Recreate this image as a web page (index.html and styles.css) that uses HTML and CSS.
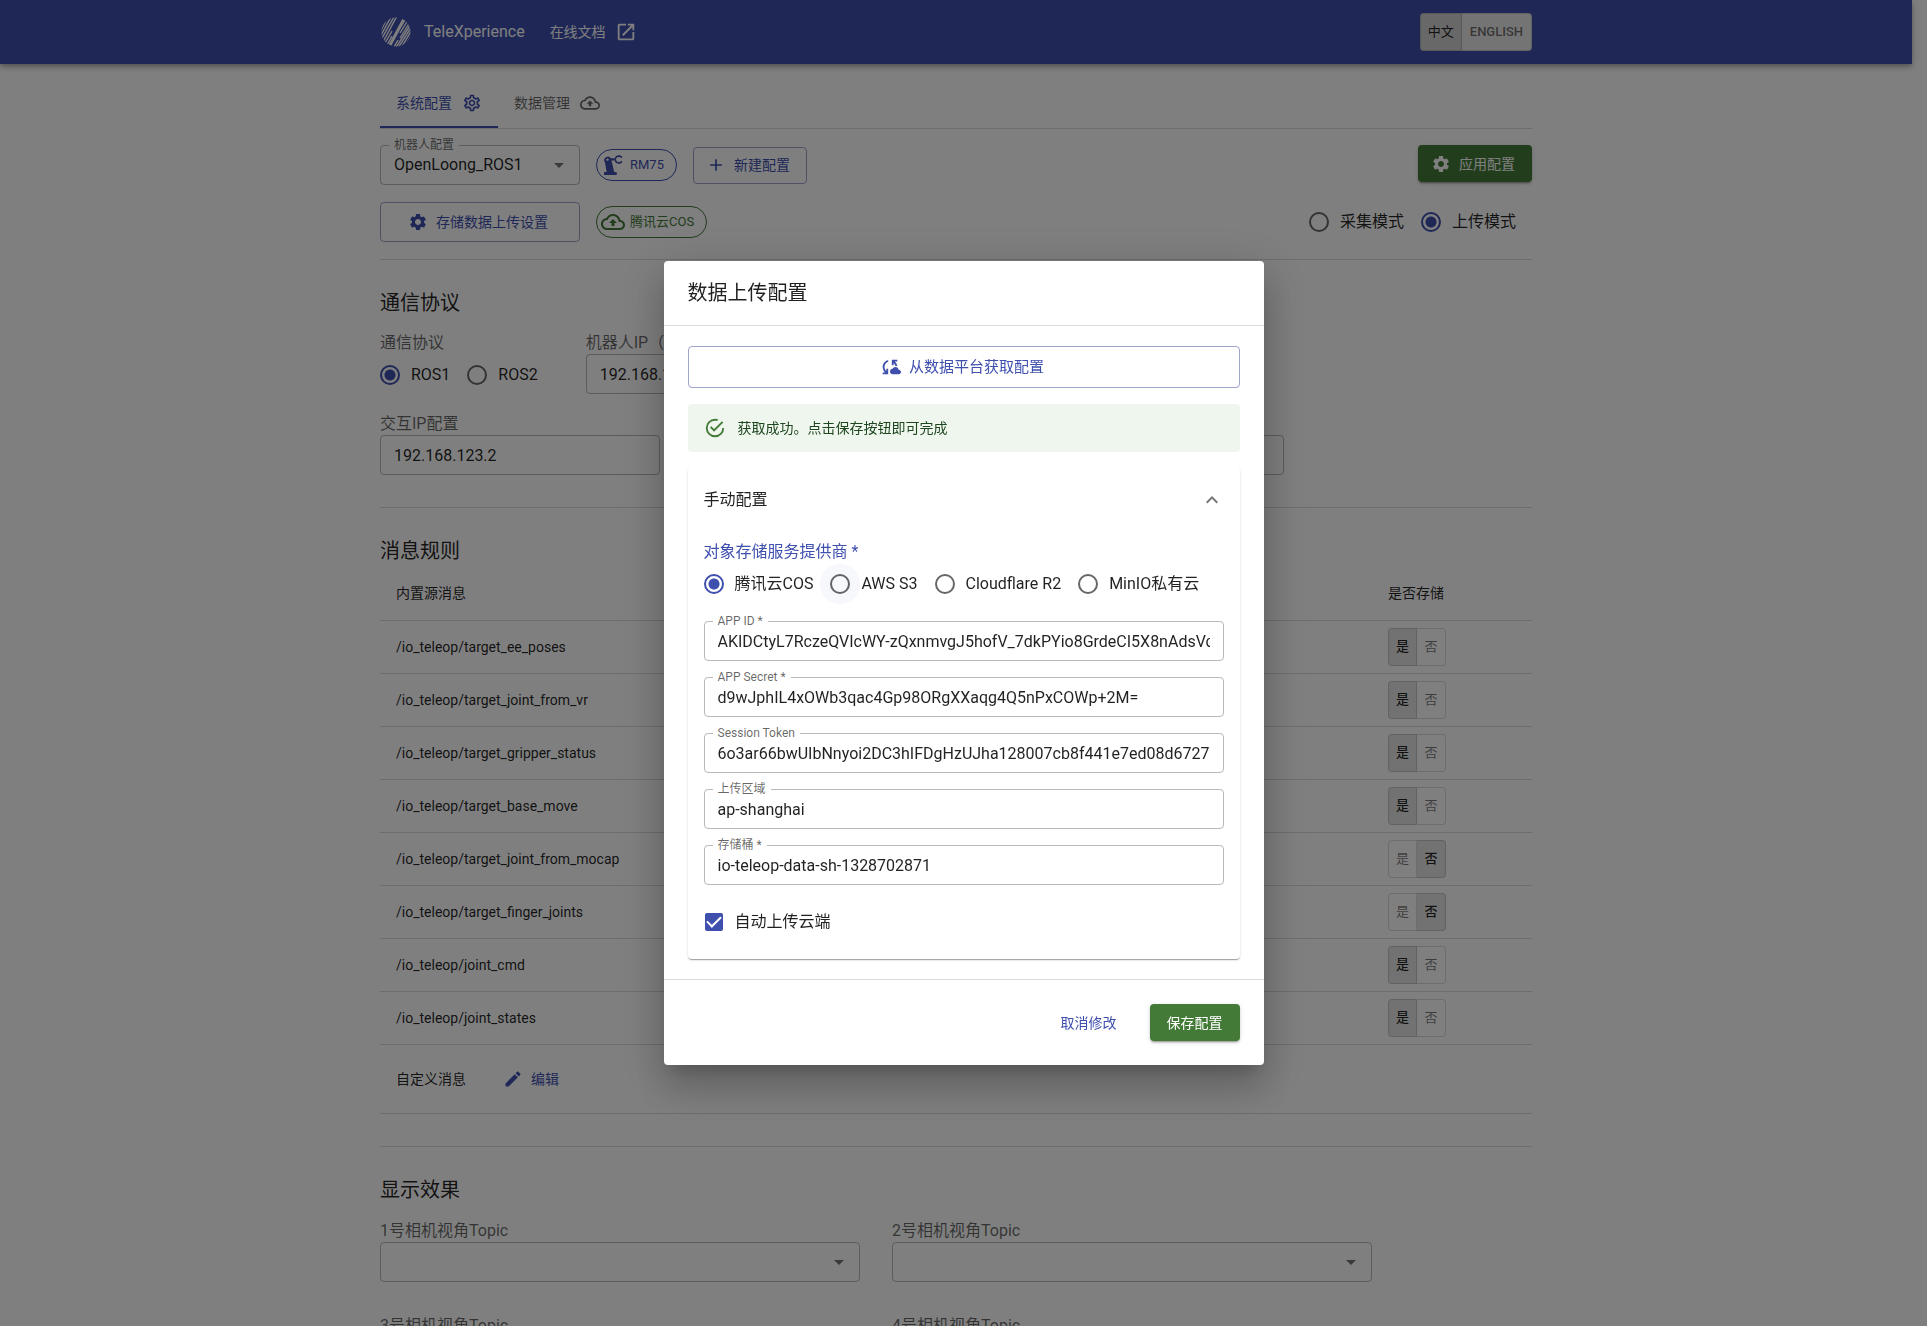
FILE: index.html
```html
<!DOCTYPE html>
<html lang="zh-CN">
<head>
<meta charset="utf-8">
<meta name="viewport" content="width=device-width, initial-scale=1">
<title>TeleXperience</title>
<link rel="stylesheet" href="styles.css">
</head>
<body>
<svg class="sprite" aria-hidden="true">
  <symbol id="i-gear" viewBox="0 0 24 24"><path d="M19.14 12.94c.04-.3.06-.61.06-.94 0-.32-.02-.64-.07-.94l2.03-1.58c.18-.14.23-.41.12-.61l-1.92-3.32c-.12-.22-.37-.29-.59-.22l-2.39.96c-.5-.38-1.03-.7-1.62-.94l-.36-2.54c-.04-.24-.24-.41-.48-.41h-3.84c-.24 0-.43.17-.47.41l-.36 2.54c-.59.24-1.13.57-1.62.94l-2.39-.96c-.22-.08-.47 0-.59.22L2.74 8.87c-.12.21-.08.47.12.61l2.03 1.58c-.05.3-.09.63-.09.94s.02.64.07.94l-2.03 1.58c-.18.14-.23.41-.12.61l1.92 3.32c.12.22.37.29.59.22l2.39-.96c.5.38 1.03.7 1.62.94l.36 2.54c.05.24.24.41.48.41h3.84c.24 0 .44-.17.47-.41l.36-2.54c.59-.24 1.13-.56 1.62-.94l2.39.96c.22.08.47 0 .59-.22l1.92-3.32c.12-.22.07-.47-.12-.61l-2.01-1.58zM12 15.6c-1.98 0-3.6-1.62-3.6-3.6s1.62-3.6 3.6-3.6 3.6 1.62 3.6 3.6-1.62 3.6-3.6 3.6z"/></symbol>
  <symbol id="i-gear-line" viewBox="0 0 24 24"><path d="M19.43 12.98c.04-.32.07-.64.07-.98 0-.34-.03-.66-.07-.98l2.11-1.65c.19-.15.24-.42.12-.64l-2-3.46c-.09-.16-.26-.25-.44-.25-.06 0-.12.01-.17.03l-2.49 1c-.52-.4-1.08-.73-1.69-.98l-.38-2.65C14.46 2.18 14.25 2 14 2h-4c-.25 0-.46.18-.49.42l-.38 2.65c-.61.25-1.17.59-1.69.98l-2.49-1c-.06-.02-.12-.03-.18-.03-.17 0-.34.09-.43.25l-2 3.46c-.13.22-.07.49.12.64l2.11 1.65c-.04.32-.07.65-.07.98 0 .33.03.66.07.98l-2.11 1.65c-.19.15-.24.42-.12.64l2 3.46c.09.16.26.25.44.25.06 0 .12-.01.17-.03l2.49-1c.52.4 1.08.73 1.69.98l.38 2.65c.03.24.24.42.49.42h4c.25 0 .46-.18.49-.42l.38-2.65c.61-.25 1.17-.59 1.69-.98l2.49 1c.06.02.12.03.18.03.17 0 .34-.09.43-.25l2-3.46c.12-.22.07-.49-.12-.64l-2.11-1.65zm-1.98-1.71c.04.31.05.52.05.73 0 .21-.02.43-.05.73l-.14 1.13.89.7 1.08.84-.7 1.21-1.27-.51-1.04-.42-.9.68c-.43.32-.84.56-1.25.73l-1.06.43-.16 1.13-.2 1.35h-1.4l-.19-1.35-.16-1.13-1.06-.43c-.43-.18-.83-.41-1.23-.71l-.91-.7-1.06.43-1.27.51-.7-1.21 1.08-.84.89-.7-.14-1.13c-.03-.31-.05-.54-.05-.74s.02-.43.05-.73l.14-1.13-.89-.7-1.08-.84.7-1.21 1.27.51 1.04.42.9-.68c.43-.32.84-.56 1.25-.73l1.06-.43.16-1.13.2-1.35h1.39l.19 1.35.16 1.13 1.06.43c.43.18.83.41 1.23.71l.91.7 1.06-.43 1.27-.51.7 1.21-1.07.85-.89.7.14 1.13zM12 8c-2.21 0-4 1.79-4 4s1.79 4 4 4 4-1.79 4-4-1.79-4-4-4zm0 6c-1.1 0-2-.9-2-2s.9-2 2-2 2 .9 2 2-.9 2-2 2z"/></symbol>
  <symbol id="i-cloud" viewBox="0 0 24 24"><path d="M19.35 10.04C18.67 6.59 15.64 4 12 4 9.11 4 6.6 5.64 5.35 8.04 2.34 8.36 0 10.91 0 14c0 3.31 2.69 6 6 6h13c2.76 0 5-2.24 5-5 0-2.64-2.05-4.78-4.65-4.96zM19 18H6c-2.21 0-4-1.79-4-4 0-2.05 1.53-3.76 3.56-3.97l1.07-.11.5-.95C8.08 7.14 9.94 6 12 6c2.62 0 4.88 1.86 5.39 4.43l.3 1.5 1.53.11c1.56.1 2.78 1.41 2.78 2.96 0 1.65-1.35 3-3 3zM8 13h2.55v3h2.9v-3H16l-4-4z"/></symbol>
  <symbol id="i-launch" viewBox="0 0 24 24"><path d="M19 19H5V5h7V3H5c-1.11 0-2 .9-2 2v14c0 1.1.89 2 2 2h14c1.1 0 2-.9 2-2v-7h-2v7zM14 3v2h3.59l-9.83 9.83 1.41 1.41L19 6.41V10h2V3h-7z"/></symbol>
  <symbol id="i-robot" viewBox="0 0 24 24"><path d="M3 22v-2c0-.6.4-1 1-1h1.600L4 9.400A3.500 3.500 0 1 1 10 5.200h3.500V7.400h-3l2.700 11.600h1.600c.6 0 1 .4 1 1v2zM6.500 5.400a1.200 1.200 0 1 0 0 2.400 1.200 1.200 0 0 0 0-2.400z"/><path d="M21 4.500l-2.400-1.600-3.200.8-1.400 2.800 1.400 2.800 3.200.8 2.400-1.600" fill="none" stroke="currentColor" stroke-width="1.600"/></symbol>
  <symbol id="i-plus" viewBox="0 0 24 24"><path d="M19 13h-6v6h-2v-6H5v-2h6V5h2v6h6v2z"/></symbol>
  <symbol id="i-arrow" viewBox="0 0 24 24"><path d="M7 10l5 5 5-5z"/></symbol>
  <symbol id="i-edit" viewBox="0 0 24 24"><path d="M3 17.250V21h3.750L17.810 9.940l-3.750-3.750L3 17.250zM20.710 7.040c.39-.39.39-1.020 0-1.410l-2.340-2.340c-.39-.39-1.020-.39-1.410 0l-1.830 1.830 3.750 3.750 1.830-1.830z"/></symbol>
  <symbol id="i-sync" viewBox="0 0 24 24"><path d="M21.5 14.98c-.02 0-.03 0-.05.01C21.2 13.3 19.76 12 18 12c-1.4 0-2.6.83-3.16 2.02C13.26 14.1 12 15.4 12 17c0 1.66 1.34 3 3 3l6.500-.02c1.38 0 2.500-1.12 2.500-2.500s-1.12-2.500-2.500-2.500zM10 4.26v2.09C7.67 7.18 6 9.39 6 12c0 1.77.78 3.34 2 4.44V14h2v6H4v-2h2.73C5.06 16.54 4 14.4 4 12c0-3.73 2.55-6.85 6-7.74zM20 6h-2.73c1.43 1.26 2.41 3.01 2.66 5h-2.02c-.23-1.36-.93-2.55-1.91-3.44V10h-2V4h6v2z"/></symbol>
  <symbol id="i-ok" viewBox="0 0 24 24"><path d="M20,12A8,8 0 0,1 12,20A8,8 0 0,1 4,12A8,8 0 0,1 12,4C12.76,4 13.5,4.11 14.2,4.31L15.77,2.74C14.61,2.26 13.34,2 12,2A10,10 0 0,0 2,12A10,10 0 0,0 12,22A10,10 0 0,0 22,12M7.91,10.08L6.5,11.5L11,16L21,6L19.59,4.58L11,13.17L7.91,10.08Z"/></symbol>
  <symbol id="i-up" viewBox="0 0 24 24"><path d="M12 8l-6 6 1.410 1.410L12 10.830l4.590 4.580L18 14z"/></symbol>
</svg>

<div class="page">
  <header class="topbar">
    <div class="container topbar-inner">
      <svg class="logo" viewBox="0 0 30 30" aria-hidden="true">
        <defs><clipPath id="disc"><circle cx="15" cy="15" r="14.500"/></clipPath></defs>
        <g clip-path="url(#disc)" fill="none" stroke="currentColor" stroke-width="1.400">
          <path d="M-2 17L7 0M-1 20L10 0M0 23L13 0M2 25L16 -1M4 26L11 14M6 28L11 19M19 11L25 1M19 16L27 3M19 21L29 5M12 32L17 23M14 32L30 7M17 31L31 9M20 31L32 11M23 31L33 14"/>
          <path d="M9 28L23 2" stroke-width="3"/>
        </g>
      </svg>
      <span class="brand">TeleXperience</span>
      <a class="doc-link" href="#docs">在线文档<svg class="icon icon-22"><use href="#i-launch"/></svg></a>
      <div class="toggle lang" role="group" aria-label="语言">
        <button type="button" class="on" aria-pressed="true">中文</button><button type="button" aria-pressed="false">ENGLISH</button>
      </div>
    </div>
  </header>

  <main class="container">
    <nav class="tabs">
      <a class="tab active" href="#system">系统配置<svg class="icon icon-20"><use href="#i-gear-line"/></svg></a>
      <a class="tab" href="#data">数据管理<svg class="icon icon-20"><use href="#i-cloud"/></svg></a>
    </nav>

    <div class="toolbar">
      <div class="field robot-field">
        <label for="robot">机器人配置</label>
        <select id="robot"><option>OpenLoong_ROS1</option></select>
        <svg class="icon icon-24 caret"><use href="#i-arrow"/></svg>
      </div>
      <span class="chip chip-primary"><svg class="icon icon-24"><use href="#i-robot"/></svg>RM75</span>
      <button type="button" class="btn outlined"><svg class="icon icon-20"><use href="#i-plus"/></svg>新建配置</button>
      <button type="button" class="btn success push apply"><svg class="icon icon-20"><use href="#i-gear"/></svg>应用配置</button>
    </div>
    <div class="toolbar">
      <button type="button" class="btn outlined upload-btn"><svg class="icon icon-20"><use href="#i-gear"/></svg>存储数据上传设置</button>
      <span class="chip chip-success"><svg class="icon icon-24"><use href="#i-cloud"/></svg>腾讯云COS</span>
      <div class="radios push" role="radiogroup" aria-label="模式">
        <label><input type="radio" name="mode">采集模式</label>
        <label><input type="radio" name="mode" checked>上传模式</label>
      </div>
    </div>

    <section class="section">
      <h2>通信协议</h2>
      <div class="form-row">
        <fieldset class="plain">
          <legend class="caption">通信协议</legend>
          <div class="radios">
            <label><input type="radio" name="ros" checked>ROS1</label>
            <label><input type="radio" name="ros">ROS2</label>
          </div>
        </fieldset>
        <div class="stack ip-field">
          <label class="caption" for="robot-ip">机器人IP（主机）</label>
          <input class="box" id="robot-ip" type="text" value="192.168.123.10">
        </div>
      </div>
      <div class="form-row">
        <div class="stack ip-field">
          <label class="caption" for="ip-a">交互IP配置</label>
          <input class="box" id="ip-a" type="text" value="192.168.123.2">
        </div>
        <div class="stack wide-field">
          <label class="caption" for="ip-b">网关</label>
          <input class="box" id="ip-b" type="text" value="192.168.123.1">
        </div>
      </div>
    </section>

    <section class="section rules">
      <h2>消息规则</h2>
      <table>
        <thead><tr><th>内置源消息</th><th class="store">是否存储</th></tr></thead>
        <tbody>
          <tr><td>/io_teleop/target_ee_poses</td><td><div class="toggle"><button type="button" class="on">是</button><button type="button">否</button></div></td></tr>
          <tr><td>/io_teleop/target_joint_from_vr</td><td><div class="toggle"><button type="button" class="on">是</button><button type="button">否</button></div></td></tr>
          <tr><td>/io_teleop/target_gripper_status</td><td><div class="toggle"><button type="button" class="on">是</button><button type="button">否</button></div></td></tr>
          <tr><td>/io_teleop/target_base_move</td><td><div class="toggle"><button type="button" class="on">是</button><button type="button">否</button></div></td></tr>
          <tr><td>/io_teleop/target_joint_from_mocap</td><td><div class="toggle"><button type="button">是</button><button type="button" class="on">否</button></div></td></tr>
          <tr><td>/io_teleop/target_finger_joints</td><td><div class="toggle"><button type="button">是</button><button type="button" class="on">否</button></div></td></tr>
          <tr><td>/io_teleop/joint_cmd</td><td><div class="toggle"><button type="button" class="on">是</button><button type="button">否</button></div></td></tr>
          <tr><td>/io_teleop/joint_states</td><td><div class="toggle"><button type="button" class="on">是</button><button type="button">否</button></div></td></tr>
          <tr class="custom"><td colspan="2"><div class="custom-cell">自定义消息<button type="button" class="btn text"><svg class="icon icon-20"><use href="#i-edit"/></svg>编辑</button></div></td></tr>
        </tbody>
      </table>
    </section>

    <section class="section">
      <h2>显示效果</h2>
      <div class="cameras">
        <div class="stack"><label class="caption" for="cam1">1号相机视角Topic</label><div class="field"><select id="cam1"><option></option></select><svg class="icon icon-24 caret"><use href="#i-arrow"/></svg></div></div>
        <div class="stack"><label class="caption" for="cam2">2号相机视角Topic</label><div class="field"><select id="cam2"><option></option></select><svg class="icon icon-24 caret"><use href="#i-arrow"/></svg></div></div>
        <div class="stack"><label class="caption" for="cam3">3号相机视角Topic</label><div class="field"><select id="cam3"><option></option></select><svg class="icon icon-24 caret"><use href="#i-arrow"/></svg></div></div>
        <div class="stack"><label class="caption" for="cam4">4号相机视角Topic</label><div class="field"><select id="cam4"><option></option></select><svg class="icon icon-24 caret"><use href="#i-arrow"/></svg></div></div>
      </div>
    </section>
  </main>
</div>

<div class="backdrop">
  <form class="dialog" role="dialog" aria-modal="true" aria-labelledby="dialog-title">
    <h2 class="dialog-title" id="dialog-title">数据上传配置</h2>
    <div class="dialog-body">
      <button type="button" class="btn outlined large"><svg class="icon icon-22"><use href="#i-sync"/></svg>从数据平台获取配置</button>
      <div class="alert" role="status"><svg class="icon icon-22"><use href="#i-ok"/></svg>获取成功。点击保存按钮即可完成</div>
      <section class="accordion">
        <button type="button" class="summary" aria-expanded="true">手动配置<svg class="icon icon-24"><use href="#i-up"/></svg></button>
        <div class="details">
          <fieldset class="plain">
            <legend class="caption focus">对象存储服务提供商 *</legend>
            <div class="radios">
              <label><input type="radio" name="provider" checked>腾讯云COS</label>
              <label><input type="radio" name="provider" class="hovered">AWS S3</label>
              <label><input type="radio" name="provider">Cloudflare R2</label>
              <label><input type="radio" name="provider">MinIO私有云</label>
            </div>
          </fieldset>
          <div class="field"><label for="app-id">APP ID *</label><input class="box" id="app-id" type="text" value="AKIDCtyL7RczeQVIcWY-zQxnmvgJ5hofV_7dkPYio8GrdeCI5X8nAdsVq3"></div>
          <div class="field"><label for="app-secret">APP Secret *</label><input class="box" id="app-secret" type="text" value="d9wJphIL4xOWb3qac4Gp98ORgXXaqg4Q5nPxCOWp+2M="></div>
          <div class="field"><label for="token">Session Token</label><input class="box" id="token" type="text" value="6o3ar66bwUIbNnyoi2DC3hIFDgHzUJha128007cb8f441e7ed08d6727e1"></div>
          <div class="field"><label for="region">上传区域</label><input class="box" id="region" type="text" value="ap-shanghai"></div>
          <div class="field"><label for="bucket">存储桶 *</label><input class="box" id="bucket" type="text" value="io-teleop-data-sh-1328702871"></div>
          <label class="check"><input type="checkbox" checked>自动上传云端</label>
        </div>
      </section>
    </div>
    <footer class="dialog-actions">
      <button type="button" class="btn text">取消修改</button>
      <button type="button" class="btn success">保存配置</button>
    </footer>
  </form>
</div>
</body>
</html>
```

FILE: styles.css
```css
:root {
  --primary: #3e4fae;
  --primary-line: rgba(62, 74, 150, .5);
  --success: #437a38;
  --text: rgba(0, 0, 0, .87);
  --muted: rgba(0, 0, 0, .6);
  --line: rgba(0, 0, 0, .14);
  --box-line: rgba(0, 0, 0, .28);
}

* { box-sizing: border-box; }

body {
  margin: 0;
  height: 100vh;
  overflow: hidden;
  padding-right: 15px;
  background: #fff;
  color: var(--text);
  font: 16px/24px Roboto, "Noto Sans CJK SC", sans-serif;
}

button, input, select { font: inherit; color: inherit; margin: 0; }
button { cursor: pointer; border: 0; background: none; }
a { color: inherit; text-decoration: none; }
h2 { margin: 0; font-size: 20px; font-weight: 400; line-height: 32px; }

.sprite { display: none; }
.icon { display: block; flex: none; fill: currentColor; }
.icon-20 { width: 20px; height: 20px; }
.icon-22 { width: 22px; height: 22px; }
.icon-24 { width: 24px; height: 24px; }

.page { height: 100%; overflow: visible; }
.container { max-width: 1200px; margin: 0 auto; padding: 0 24px; }

/* Top bar */
.topbar {
  background: var(--primary);
  color: #fff;
  box-shadow: 0 2px 4px -1px rgba(0, 0, 0, .2), 0 4px 5px rgba(0, 0, 0, .14), 0 1px 10px rgba(0, 0, 0, .12);
}
.topbar-inner { display: flex; align-items: center; height: 64px; }
.logo { width: 30px; height: 30px; margin: 0 13px 0 1px; }
.doc-link { display: flex; align-items: center; gap: 9px; margin-left: 25px; font-size: 14px; }

/* Toggle groups */
.toggle { display: inline-flex; vertical-align: top; font-size: 13px; line-height: 22px; }
.toggle button {
  min-width: 29px;
  height: 38px;
  padding: 0 7px;
  border: 1px solid var(--line);
  color: rgba(0, 0, 0, .54);
}
.toggle button:first-child { border-radius: 4px 0 0 4px; }
.toggle button:last-child { border-radius: 0 4px 4px 0; border-left: 0; }
.toggle .on { background: rgba(0, 0, 0, .1); color: var(--text); font-weight: 500; }
.lang { margin-left: auto; border-radius: 4px; background: #e8e8e8; }
.lang button { padding: 0 8px; font-weight: 500; }
.lang .on { padding: 0 7px; font-weight: 400; }

/* Tabs */
.tabs { display: flex; margin-top: 16px; border-bottom: 1px solid var(--line); }
.tab {
  display: flex;
  align-items: center;
  gap: 10px;
  height: 48px;
  padding: 0 16px;
  border-bottom: 2px solid transparent;
  color: var(--muted);
  font-size: 14px;
}
.tab.active { color: var(--primary); border-color: var(--primary); }

/* Toolbar */
.toolbar { display: flex; align-items: center; gap: 16px; margin-top: 16px; }
.push { margin-left: auto; }
.robot-field, .upload-btn { width: 200px; }

.btn {
  display: inline-flex;
  align-items: center;
  justify-content: center;
  gap: 8px;
  height: 37px;
  padding: 0 17px;
  border-radius: 4px;
  font-size: 14px;
}
.btn .icon { margin-left: -4px; }
.btn.outlined { padding: 0 16px; border: 1px solid var(--primary-line); color: var(--primary); }
.btn.text { padding: 0 9px; color: var(--primary); }
.btn.success {
  background: var(--success);
  color: #fff;
  box-shadow: 0 3px 1px -2px rgba(0, 0, 0, .2), 0 2px 2px rgba(0, 0, 0, .14), 0 1px 5px rgba(0, 0, 0, .12);
}
.btn.apply { align-self: flex-start; }
.btn.upload-btn { height: 40px; }
.btn.large { width: 100%; height: 42px; font-size: 15px; }

.chip {
  display: inline-flex;
  align-items: center;
  gap: 5px;
  height: 32px;
  padding: 0 12px 0 4px;
  border: 1px solid;
  border-radius: 16px;
  font-size: 13px;
}
.chip-primary { color: var(--primary); }
.chip-success { color: var(--success); }

/* Form controls */
.box, select {
  display: block;
  width: 100%;
  height: 40px;
  padding: 0 13px;
  border: 1px solid var(--box-line);
  border-radius: 4px;
  background: transparent;
  outline: 0;
}
select { appearance: none; padding-right: 32px; }
.field { position: relative; }
.field > label {
  position: absolute;
  top: -9px;
  left: 9px;
  padding: 0 5px;
  background: #fff;
  color: var(--muted);
  font-size: 12px;
  line-height: 18px;
}
.caret { position: absolute; top: 8px; right: 9px; color: rgba(0, 0, 0, .54); pointer-events: none; }

.plain { margin: 0; padding: 0; border: 0; min-width: 0; }
.caption { display: block; padding: 0; color: var(--muted); line-height: 23px; }
.caption.focus { color: var(--primary); }

.radios { display: flex; gap: 17px; padding-right: 16px; }
.radios label, .check { display: flex; align-items: center; gap: 11px; height: 42px; white-space: nowrap; }
input[type="radio"] {
  appearance: none;
  flex: none;
  width: 20px;
  height: 20px;
  border: 2px solid var(--muted);
  border-radius: 50%;
}
input[type="radio"]:checked {
  border-color: var(--primary);
  background: radial-gradient(circle, var(--primary) 5px, transparent 6px);
}
input[type="radio"].hovered { background: rgba(63, 81, 181, .04); box-shadow: 0 0 0 10px rgba(63, 81, 181, .04); }
input[type="checkbox"] {
  appearance: none;
  display: grid;
  place-items: center;
  flex: none;
  width: 18px;
  height: 18px;
  margin: 0 1px;
  border-radius: 2px;
  background: var(--primary);
}
input[type="checkbox"]::before {
  content: "";
  width: 12px;
  height: 6px;
  margin-bottom: 4px;
  border: solid #fff;
  border-width: 0 0 2px 2px;
  rotate: -45deg;
}

/* Page sections */
.section { margin-top: 16px; padding-top: 27px; border-top: 1px solid var(--line); }
.form-row { display: flex; gap: 32px; margin-top: 12px; }
.form-row + .form-row { margin-top: 16px; }
.ip-field { width: 280px; }
.wide-field { width: 592px; }

.rules { margin-top: 32px; }
table { width: 100%; border-collapse: collapse; font-size: 14px; }
th, td { height: 53px; padding: 0 16px; border-bottom: 1px solid var(--line); text-align: left; font-weight: 400; }
.store { width: 160px; }
.custom td { height: 69px; }
.custom-cell { display: flex; align-items: center; gap: 32px; }
.rules + .section { margin-top: 32px; }
.cameras { display: grid; grid-template-columns: repeat(2, minmax(0, 480px)); gap: 32px; margin-top: 13px; }

/* Dialog */
.backdrop {
  position: fixed;
  inset: 0;
  display: flex;
  align-items: center;
  justify-content: center;
  background: rgba(0, 0, 0, .5);
}
.dialog {
  width: 100%;
  max-width: 600px;
  border-radius: 4px;
  background: #fff;
  box-shadow: 0 11px 15px -7px rgba(0, 0, 0, .2), 0 24px 38px 3px rgba(0, 0, 0, .14), 0 9px 46px 8px rgba(0, 0, 0, .12);
}
.dialog-title { padding: 16px 24px; }
.dialog-body {
  display: flex;
  flex-direction: column;
  gap: 16px;
  padding: 20px 24px;
  border-top: 1px solid var(--line);
  border-bottom: 1px solid var(--line);
}
.alert {
  display: flex;
  align-items: center;
  gap: 12px;
  height: 48px;
  padding: 0 16px;
  border-radius: 4px;
  background: #eff6ed;
  color: #1e4620;
  font-size: 14px;
}
.alert .icon { color: var(--success); }
.accordion {
  border-radius: 4px;
  box-shadow: 0 2px 1px -1px rgba(0, 0, 0, .2), 0 1px 1px rgba(0, 0, 0, .14), 0 1px 3px rgba(0, 0, 0, .12);
  clip-path: inset(0 -4px -4px -4px);
}
.summary { display: flex; align-items: center; justify-content: space-between; width: 100%; height: 64px; padding: 0 16px; }
.summary .icon { color: rgba(0, 0, 0, .54); }
.details { display: flex; flex-direction: column; gap: 16px; padding: 8px 16px 16px; }
.dialog-actions { display: flex; justify-content: flex-end; gap: 24px; padding: 24px; }
```
